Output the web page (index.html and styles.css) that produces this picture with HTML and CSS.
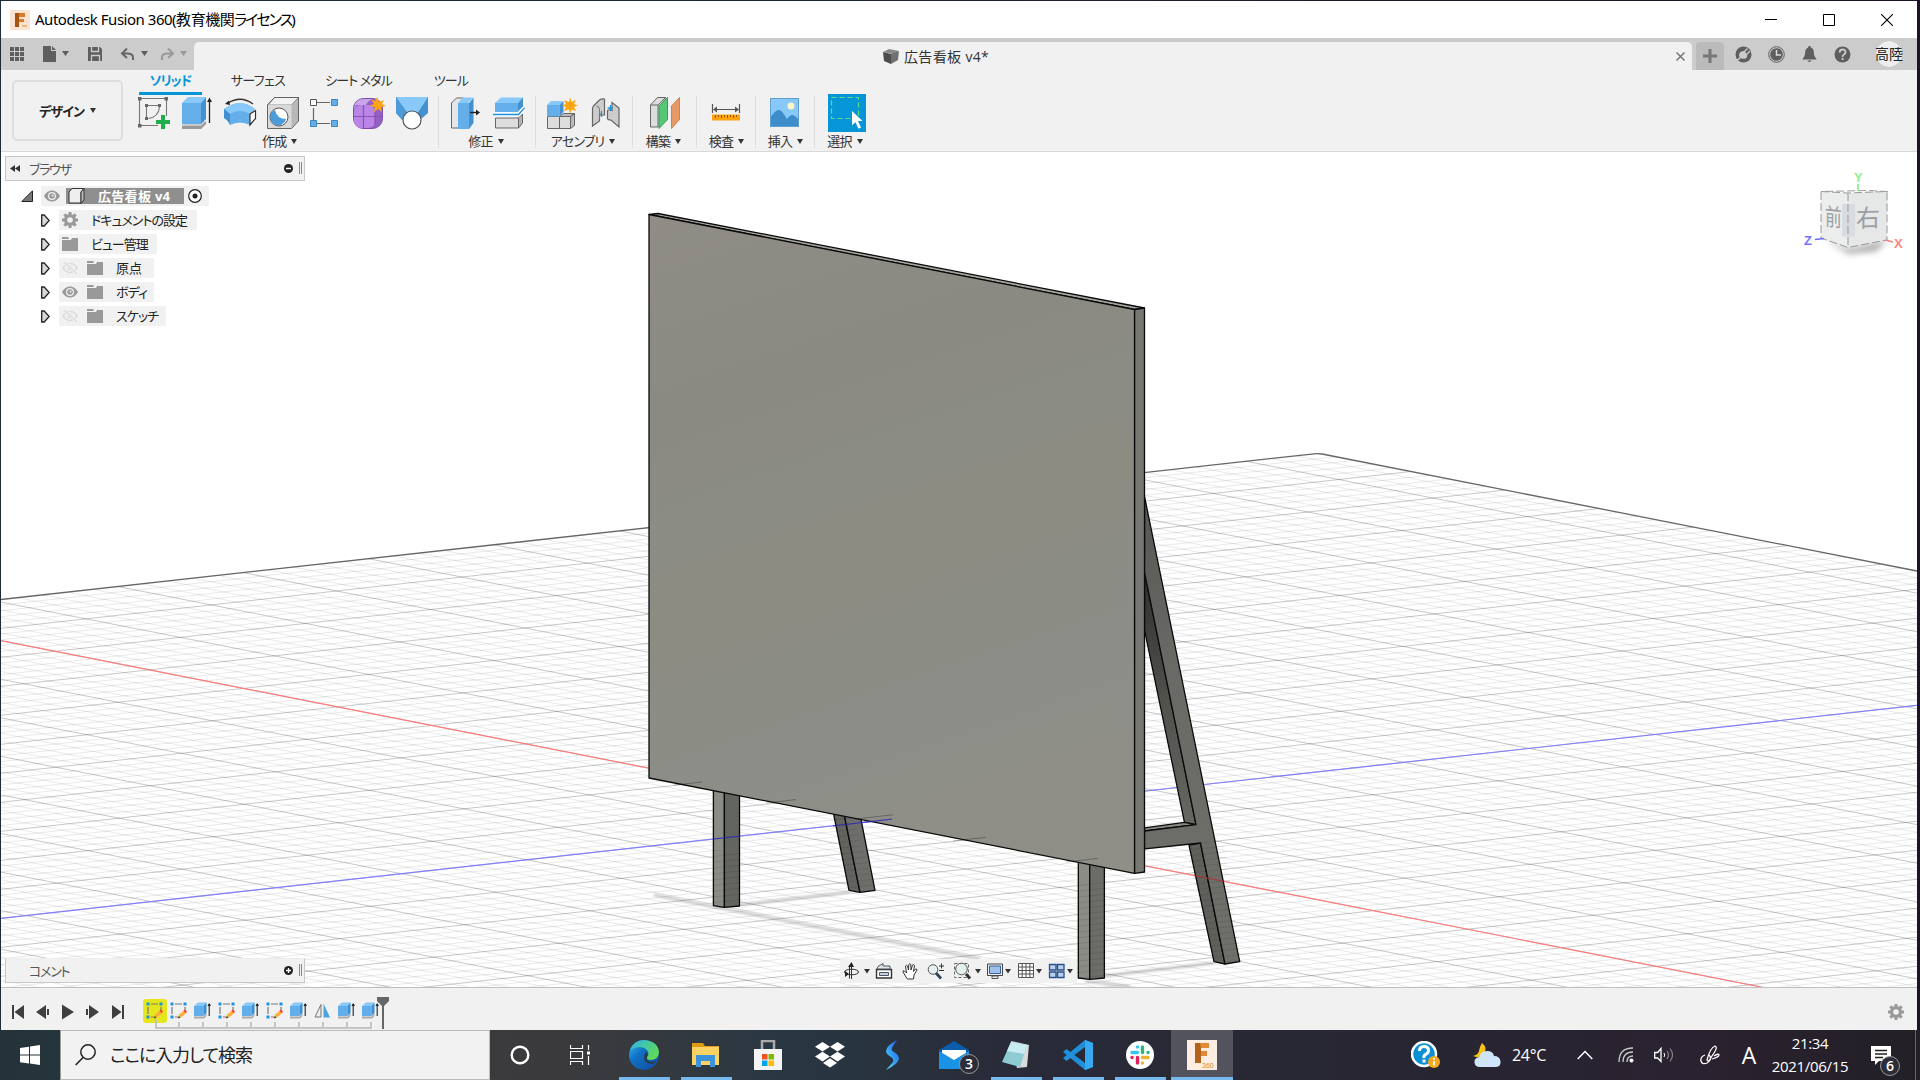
FILE: index.html
```html
<!DOCTYPE html>
<html lang="ja">
<head>
<meta charset="utf-8">
<title>Autodesk Fusion 360</title>
<link rel="stylesheet" href="styles.css">
</head>
<body>
<svg class="defs" width="0" height="0">
  <defs>
    <linearGradient id="gBoard" x1="0" y1="0" x2="0.25" y2="1"><stop offset="0" stop-color="#8f8d85"/><stop offset=".3" stop-color="#8b8a82"/><stop offset=".45" stop-color="#8b8c84"/><stop offset=".6" stop-color="#8d8c83"/><stop offset=".8" stop-color="#8b8d86"/><stop offset="1" stop-color="#8f8f88"/></linearGradient>
    <linearGradient id="gDark" x1="0" y1="0" x2="0" y2="1"><stop offset="0" stop-color="#30302e"/><stop offset=".5" stop-color="#50514d"/><stop offset="1" stop-color="#666761"/></linearGradient>
    <linearGradient id="gLeg" x1="0" y1="0" x2="0" y2="1"><stop offset="0" stop-color="#565753"/><stop offset=".35" stop-color="#696a65"/><stop offset="1" stop-color="#6f706a"/></linearGradient>
    <linearGradient id="gEdge" x1="0" y1="0" x2="1" y2="1"><stop offset="0" stop-color="#35c1f1"/><stop offset=".4" stop-color="#0f6fc4"/><stop offset="1" stop-color="#114a9b"/></linearGradient>
    <linearGradient id="gEdge2" x1="0" y1="0" x2="1" y2=".6"><stop offset="0" stop-color="#2bb3ee"/><stop offset="1" stop-color="#5fdc55"/></linearGradient>
    <linearGradient id="gS" x1="0" y1="1" x2="1" y2="0"><stop offset="0" stop-color="#6fe0f8"/><stop offset=".5" stop-color="#2f9cf5"/><stop offset="1" stop-color="#2a50d8"/></linearGradient>
    <filter id="soft"><feGaussianBlur stdDeviation="1.3"/></filter>
    <filter id="cubeShade" x="-30%" y="-60%" width="160%" height="220%"><feGaussianBlur stdDeviation="3"/></filter>
  </defs>
  <symbol id="i-eye" viewBox="0 0 16 12"><path d="M0 6C3 1 6 .5 8 .5S13 1 16 6c-3 5-6 5.500-8 5.500S3 11 0 6z" fill="#9a9a9a"/><circle cx="8" cy="6" r="4" fill="#f1f1f1"/><circle cx="8" cy="6" r="2.800" fill="#999"/><circle cx="8.600" cy="5.500" r="1" fill="#eee"/></symbol>
  <symbol id="i-eyeoff" viewBox="0 0 16 12"><path d="M1 6C3 2 6 1.500 8 1.500S13 2 15 6c-3 4-5 4.500-7 4.500S4 10 1 6z" fill="none" stroke="#ddd" stroke-width="1.700"/><circle cx="8" cy="6" r="2.500" fill="#ddd"/><path d="M2 0l13 12" stroke="#f1f1f1" stroke-width="3"/><path d="M2 0l13 12" stroke="#ddd" stroke-width="1.400"/></symbol>
  <symbol id="i-folder" viewBox="0 0 16 14"><path d="M0 0h6l1 2H0zM0 3h9l1-2h6v13H0z" fill="#999"/></symbol>
  <symbol id="i-gear" viewBox="0 0 16 16"><g fill="#999"><path d="M6.500 0h3v16h-3zM0 6.500h16v3H0z"/><path d="M6.500 0h3v16h-3zM0 6.500h16v3H0z" transform="rotate(45 8 8)"/><circle cx="8" cy="8" r="6"/></g><circle cx="8" cy="8" r="2.800" fill="#f1f1f1"/></symbol>
  <symbol id="i-tri" viewBox="0 0 9 13"><path d="M.7 1h2.500l5 5.500-5 5.500H.7z" fill="#d8d8d8" stroke="#222" stroke-width="1.300"/></symbol>
  <symbol id="i-sketch" viewBox="0 0 17 17"><path d="M5 2h7M2 5v7M15 5v3M5 15h3" stroke="#777" stroke-width="1.200"/><g fill="#1a95e0"><path d="M.5.500h3v3h-3zM13.500.500h3v3h-3zM.5 13.500h3v3h-3z"/></g><path d="M8 16l1-3.500 5-4 2.500 2.500-5 4z" fill="#fbb03b"/><path d="M13.500 8.800l1.500-1.300 2 2-1.500 1.500z" fill="#f33"/><path d="M8 16.500l.8-2.500 1.700 1.700z" fill="#333"/></symbol>
  <symbol id="i-ext" viewBox="0 0 17 17"><path d="M0 14.500h9.500l3-3v2.500l-2.500 2.500H0z" fill="#aaa"/><path d="M0 4l4-3.500h8.500L9.500 4z" fill="#88c9f9"/><path d="M0 4h9.500v10H0z" fill="#63aeea"/><path d="M9.500 4l3-3.500V11l-3 3z" fill="#3d8fd3"/><path d="M15.200 2v12" stroke="#333" stroke-width="1.200"/><path d="M13.400 4l1.800-3 1.800 3z" fill="#222"/></symbol>
</svg>

<div class="screen">
  <div class="window">
    <header class="titlebar">
      <svg class="app-icon" width="20" height="20" viewBox="0 0 20 20"><rect width="20" height="20" fill="#fbe3d0"/><path d="M5 3h10v4H9v2h5v3H9v5H5z" fill="#d67b27"/><path d="M5 3h4v14H5z" fill="#a65312"/><path d="M12 15h5v2h-5z" fill="#f1b987"/></svg>
      <span class="app-title">Autodesk Fusion 360(教育機関<span class="kana">ライセンス</span>)</span>
      <div class="win-buttons">
        <svg width="12" height="12"><path d="M0 5.500h12" stroke="#000"/></svg>
        <svg width="12" height="12"><path d="M.5.500h11v11H.5z" fill="none" stroke="#000"/></svg>
        <svg width="12" height="12"><path d="M0 0l12 12M12 0L0 12" stroke="#000" stroke-width="1.100"/></svg>
      </div>
    </header>

    <div class="tabbar">
      <div class="quick">
        <svg width="188" height="32" viewBox="1 38 188 32">
          <g fill="#5e5e5e"><path d="M10 47h4v4h-4zM15 47h4v4h-4zM20 47h4v4h-4zM10 52h4v4h-4zM15 52h4v4h-4zM20 52h4v4h-4zM10 57h4v4h-4zM15 57h4v4h-4zM20 57h4v4h-4z"/><path d="M43 46h8v5h5v11H43zM52 46l4 4h-4z"/><path d="M62 51h7l-3.500 5zM141 51h7l-3.500 5z"/><path d="M88 47h12l2 2v12H88z"/></g>
          <path d="M91.500 47v4.500h7V47M91.500 61v-5.500h8V61" fill="none" stroke="#ccc" stroke-width="1.300"/>
          <path d="M133 60v-2.500q0-4-6-4h-4M127 48.500l-5 5 5 4.500" fill="none" stroke="#666" stroke-width="2"/>
          <path d="M162 60v-2.500q0-4 6-4h4M168 48.500l5 5-5 4.500" fill="none" stroke="#999" stroke-width="2"/><path d="M180 51h7l-3.500 5z" fill="#999"/>
        </svg>
      </div>
      <div class="doc-tab">
        <svg width="16" height="15" viewBox="0 0 16 15"><path d="M0 3l6-3 10 2-6 3z" fill="#888"/><path d="M0 3l8 2v10l-7-3z" fill="#4d4d4d"/><path d="M8 5l8-3-1 9-7 4z" fill="#707070"/></svg>
        <span class="doc-name">広告看板 v4*</span>
        <svg class="tab-close" width="9" height="9"><path d="M.5.500l8 8M8.500.500l-8 8" stroke="#777" stroke-width="1.500"/></svg>
      </div>
      <div class="new-tab"><svg width="14" height="14"><path d="M7 0v14M0 7h14" stroke="#777" stroke-width="3"/></svg></div>
      <div class="status">
        <svg width="17" height="17"><circle cx="8.500" cy="8.500" r="8" fill="#5e5e5e"/><path d="M4.500 11.500q-1.500-4.500 2-6 2-1 3 0l2.500 2.500q1 3-1.500 4.500-3 1-6-1z" fill="#ccc"/><path d="M9 6l3.500-3.500M11.500 8.500L15 5M5 11.500Q4 14 1.500 14" fill="none" stroke="#ccc" stroke-width="1.400"/></svg>
        <svg width="17" height="17"><circle cx="8.500" cy="8.500" r="7.800" fill="none" stroke="#5e5e5e"/><circle cx="8.500" cy="8.500" r="6.300" fill="#5e5e5e"/><path d="M8.500 4v5H13" fill="none" stroke="#ddd" stroke-width="1.500"/></svg>
        <svg width="17" height="17"><path d="M8.500 0a1.300 1.300 0 0 1 1.300 1.500q3 1 3 4.500 0 4 1.200 5t1.700 2.500H1.300Q2 12 3 11t1.200-5q0-3.500 3-4.500A1.300 1.300 0 0 1 8.500 0zM6.500 14.500h4q-2 3-4 0z" fill="#5e5e5e"/></svg>
        <svg width="17" height="17"><circle cx="8.500" cy="8.500" r="8" fill="#5e5e5e"/><path d="M5.700 6.500q0-3 2.900-3t2.900 2.600q0 1.600-1.600 2.400T8.600 11M8.600 12v2" fill="none" stroke="#ccc" stroke-width="1.900"/></svg>
        <span class="avatar">高陸</span>
      </div>
    </div>

    <div class="ribbon">
      <div class="workspace"><span>デザイン</span><i class="caret"></i></div>
      <div class="ribbon-body">
        <nav class="ribbon-tabs">
          <span class="rtab t1 active">ソリッド</span><span class="rtab t2">サーフェス</span><span class="rtab t3">シート メタル</span><span class="rtab t4">ツール</span>
        </nav>
        <div class="groups">
          <section class="group g1">
            <svg width="310" height="38" viewBox="128 94 310 38">
              <path d="M140 98.500h26M139.500 98v27M140 125.500h18M166.500 98v18" stroke="#777" stroke-width="1.100"/><g fill="#666"><path d="M138 97h3.500v3.500H138zM164.500 97h3.500v3.500h-3.500zM138 124h3.500v3.500H138zM145 104h3v3h-3zM158 104h3v3h-3zM145 117h3v3h-3z"/></g><path d="M148 105.500h10M146.500 107v10M159.500 107q-1 10-11 11.500" fill="none" stroke="#777" stroke-width="1.100"/><path d="M161 115h4v5h5v4h-5v5h-4v-5h-5v-4h5z" fill="#1fae4b"/>
              <path d="M182 125.500h19l5-4.500v3l-5 5h-19z" fill="#999"/><path d="M182 125h19l4-4h-19z" fill="#ccc"/><path d="M182 103l6-6h18l-5 6z" fill="#88c9fa"/><path d="M182 103h19v21h-19z" fill="#64aee9"/><path d="M201 103l5-6v22l-5 5z" fill="#4391d0"/><path d="M209.500 100v23" stroke="#222" stroke-width="1.300"/><path d="M207 102l2.500-4.500L212 102z" fill="#222"/>
              <path d="M224 109q16-12 31 0l-5 5v11q-10-5-20 0-2-5-6-7z" fill="#64aee9"/><path d="M224 109q16-12 31 0l-5 5q-10-6-20 0z" fill="#88c9fa"/><path d="M224 109l6 5v11q-1-4-6-7z" fill="#3f8fd0"/><path d="M250 114l5.500-3.500v8l-5.500 6.500z" fill="#fff" stroke="#333" stroke-width="1.200"/><path d="M228 103q13-8 25 1" fill="none" stroke="#333" stroke-width="1.300"/><path d="M225 104l4-3.500 1 4.500z" fill="#222"/>
              <path d="M267.500 105l7-7.500h24l-7 7.500z" fill="#f2f2f2" stroke="#666"/><path d="M267.500 105h24v23h-24z" fill="#d9d9d9" stroke="#d9d9d9"/><path d="M291.500 105l7-7.500V121l-7 7z" fill="#b8b8b8"/><path d="M267.500 105l7-7.500h24V121l-7 7.500h-24z" fill="none" stroke="#666"/><circle cx="279" cy="117" r="9" fill="#fff" stroke="#555"/><path d="M275 110a8 8 0 1 0 11 9q-9 0-11-9z" fill="#4b9cdb"/>
              <path d="M313.500 108v12M317 102.500h13M317 123.500h13" stroke="#666" stroke-width="1.200"/><path d="M310.500 99.500h6v6h-6z" fill="#fff" stroke="#555"/><g fill="#64aee9" stroke="#3e86bf"><path d="M331.500 99.500h6v6h-6zM310.500 120.500h6v6h-6zM331.500 120.500h6v6h-6z"/></g>
              <rect x="353.500" y="98.500" width="29" height="30" rx="10" fill="#9560c4" stroke="#7c4ba8"/><path d="M354 110q0-11 10-11h8q-5 3-6 6H356z" fill="#c9a6ea"/><rect x="354" y="105" width="21" height="23" rx="7" fill="#ba85e6"/><path d="M363.500 105v23M354 116.500h29M375 112v12" stroke="#8753b5" stroke-width="1.200"/><path d="M377 97l2 5 5-2-2 4 4 2-5 1 1 5-4-3-4 3 1-5-6-1 5-2-3-5 4 2z" fill="#fca510"/>
              <path d="M396 97h32v16l-7 6-9-8-10 9-6-7z" fill="#4391d0"/><path d="M396 97h32l-11 17h-9z" fill="#88c9fa"/><path d="M396 97l12 17-5 6-7-7z" fill="#4c9ad8"/><circle cx="412" cy="120" r="9" fill="#fff" stroke="#555" stroke-width="1.200"/>
            </svg>
            <span class="glabel">作成<i class="caret"></i></span>
          </section>
          <section class="group g2">
            <svg width="96" height="38" viewBox="439 94 96 38">
              <path d="M451.500 103l5-5h7v30h-12z" fill="#e6e6e6" stroke="#666"/><path d="M458 103l5-5.500h10L468 103z" fill="#88c9fa"/><path d="M458 103h11v26h-11z" fill="#64aee9"/><path d="M469 103l4.500-5.500V123l-4.500 6z" fill="#4391d0"/><path d="M470 112.500h8" stroke="#222" stroke-width="1.400"/><path d="M476 109.500l4 3-4 3z" fill="#222"/>
              <path d="M495 103l6-5.500h22l-5 5.500z" fill="#88c9fa"/><path d="M495 103h23v9h-23z" fill="#64aee9"/><path d="M518 103l5-5.500v9l-5 5z" fill="#4391d0"/><path d="M495.500 118h23v10h-23z" fill="#ddd" stroke="#666"/><path d="M518.500 118l4-4v9l-4 5z" fill="#b5b5b5" stroke="#666"/><path d="M493 114.500h25.500l6-6.500" fill="none" stroke="#fff" stroke-width="4"/><path d="M493 114.500h25.500l6-6.500" fill="none" stroke="#1a8fe0" stroke-width="1.300"/>
            </svg>
            <span class="glabel">修正<i class="caret"></i></span>
          </section>
          <section class="group g3">
            <svg width="96" height="38" viewBox="536 94 96 38">
              <path d="M547.500 116.500h12v12h-12zM559.500 116.500h11v12h-11z" fill="#ddd" stroke="#666"/><path d="M559.500 116.500l4-3h11l-4 3zM570.500 116.500l4-3v12l-4 3z" fill="#bbb" stroke="#666"/><path d="M547 105l4-4h12l-3 4z" fill="#88c9fa"/><path d="M547 105h12.500v11.500H547z" fill="#64aee9"/><path d="M559.500 105l4-4v11l-4 4z" fill="#4391d0"/><path d="M570 97l1.500 5 4.500-2-2 4 4 1.500-4 1.500 2 4-4.500-1.500L570 114l-1-4.500-5 1.500 2-4-4-1.500 4-1.500-2-4 5 2z" fill="#fca510"/>
              <path d="M592.500 109q0-3 3-5l4-4q2-1.500 5-1v16h-4l-1-2v8l-7 5zM607.500 110.500q2-1.500 4.500 0v-8l7 5.500v19l-8-7q-4 0-3.500-2z" fill="#ccc" stroke="#666" stroke-width="1.200"/><path d="M596.500 106q3 0 3 4v9" fill="none" stroke="#777"/><path d="M601.500 111v6M610.500 105v6M607.500 108h5" stroke="#1a95e0" stroke-width="1.300"/>
            </svg>
            <span class="glabel">アセンブリ<i class="caret"></i></span>
          </section>
          <section class="group g4">
            <svg width="63" height="38" viewBox="633 94 63 38"><path d="M650.500 105l7-7.500h8l-7.500 7.500v22h-7.500z" fill="#ddd" stroke="#666"/><path d="M650.500 105h7.500l8-7.500" fill="none" stroke="#666"/><path d="M659 106l8.500-8.500v22l-8.500 9z" fill="#55c777" stroke="#369d58"/><path d="M671.500 106l8-8.500v22l-8 9z" fill="#e79a65" stroke="#cc8350"/></svg>
            <span class="glabel">構築<i class="caret"></i></span>
          </section>
          <section class="group g5">
            <svg width="58" height="38" viewBox="697 94 58 38"><path d="M712.500 104v9M739.500 104v9M714 109.500h24" stroke="#555" stroke-width="1.200"/><path d="M713 109.500l4-3v6zM739 109.500l-4-3v6z" fill="#555"/><path d="M712 114.500h28v6h-28z" fill="#fca510"/><path d="M715.500 115v3M718.500 115v2M721.500 115v3M724.500 115v2M727.500 115v3M730.500 115v2M733.500 115v3M736.500 115v2" stroke="#8b5a0a"/></svg>
            <span class="glabel">検査<i class="caret"></i></span>
          </section>
          <section class="group g6">
            <svg width="58" height="38" viewBox="756 94 58 38"><path d="M770 98h29v29h-29z" fill="#88c9fa"/><path d="M770 118q6-9 9-8 3 0 8 9 3-4 5-4 3 0 7 5v7h-29z" fill="#3d8dcb"/><circle cx="791" cy="106" r="3.500" fill="#fdf6c3"/><path d="M770.500 98.500h28v28h-28z" fill="none" stroke="#5f9fd0"/></svg>
            <span class="glabel">挿入<i class="caret"></i></span>
          </section>
          <section class="group g7">
            <svg width="64" height="38" viewBox="815 94 64 38"><path d="M828 94h38v38h-38z" fill="#0696d7"/><path d="M831.500 97.500h27v21h-27z" fill="none" stroke="#5fdb8a" stroke-width="1.200" stroke-dasharray="5 3"/><path d="M852 111l10.500 10h-4.500l3 6.500-2.500 1.200-3-6.500-3.500 3z" fill="#fff"/></svg>
            <span class="glabel">選択<i class="caret"></i></span>
          </section>
        </div>
      </div>
    </div>

    <main class="viewport">
      <svg class="scene" width="1916" height="835" viewBox="1 152 1916 835">
        <clipPath id="ground"><path d="M1 599.500L1312 454q6-1 12 .6L1917 571v416H1z"/></clipPath>
        <clipPath id="feet"><path d="M713 850h27v60h-27zM833 816h20l24 80h-28zM1078 880h27v100h-27zM1185 845l15-3 24-1 18 124h-26z"/></clipPath>
        <g clip-path="url(#ground)">
          <path id="minor" fill="none" stroke="#000" stroke-opacity=".085" stroke-width="1"/>
          <path id="major" fill="none" stroke="#000" stroke-opacity=".22" stroke-width="1"/>
        </g>
        <path d="M1 599.500L1314 453.800q4-.5 8 .2L1917 571" fill="none" stroke="#666" stroke-width="1.300"/>
        <g fill="none" stroke="#000" filter="url(#soft)" stroke-opacity=".2" stroke-width="3"><path d="M654 895l326 64M739 905l110-13M1085 981l45 6M1104 976l110-13"/></g>
        <path d="M1 640.700L1761 987" stroke="#ff7b7b" stroke-width="1.200"/>
        <path d="M1 918.300L1917 705.300" stroke="#8080ff" stroke-width="1.200"/>
        <g stroke="#0a0a0a" stroke-width="1.300" stroke-linejoin="round">
          <path d="M1144.500 572L1196 824.600 1184.500 822.400 1144.500 630z" fill="url(#gDark)"/>
          <path d="M1144.500 827.800l40-5.400 11.500 2.200-51.500 6.400z" fill="#888a84"/>
          <path d="M1189 845l11.500-2L1225 964l-11-2.300z" fill="#5f605b"/>
          <path d="M1144.500 496.500L1239.700 961.700 1225 964 1200.500 843l-56 5.800V831l51.500-6.400-51.500-252.200z" fill="url(#gLeg)"/>
          <path d="M833.400 813l10.900 2 15.700 77.300-11-2z" fill="#63645f"/><path d="M844.300 815l16.400 3 14.300 72.300-15 2z" fill="#6e6f6a"/>
          <path d="M713.400 788l11 2v117.300l-11-1.600z" fill="#8b8c84"/><path d="M724.400 790l15.100 3v113l-15.100 1.300z" fill="#636560"/>
          <path d="M1078.300 860l11.400 2v117.300l-11.400-1.300z" fill="#8b8c84"/><path d="M1089.700 862l14.700 3v113l-14.700 1.300z" fill="#6c6d68"/>
          <path d="M649 214.500l9-1 486.500 94.500-10 1.500z" fill="#a3a49e"/>
          <path d="M1134.500 309.500l10-1.500v564l-10 1.300z" fill="#767873"/>
          <path d="M649 214.500l485.500 95v563.800L649 778z" fill="url(#gBoard)"/>
        </g>
        <g clip-path="url(#feet)"><path id="over" fill="none" stroke="#000" stroke-opacity=".09" stroke-width="1"/></g>
        <path d="M674 785l28-3M766 803l30-3.500M855 819l38-4.200M953 841l33-3.700M1066 862l32-3.600" stroke="#000" stroke-opacity=".28"/>
        <path d="M713 839.200l27-3M833 825.800l59-6.600" stroke="#2424b8" stroke-width="1.200" stroke-opacity=".75"/>
        <path d="M1194 875.300l30 6" stroke="#a33" stroke-width="1.200" stroke-opacity=".8"/>
      </svg>

      <aside class="browser">
        <div class="panel-head">
          <svg width="10" height="7"><path d="M5 0v7L0 3.500zM10 0v7L5 3.500z" fill="#333"/></svg>
          <span class="panel-title">ブラウザ</span>
          <svg width="9" height="9"><circle cx="4.500" cy="4.500" r="4.500" fill="#222"/><path d="M2 4.500h5" stroke="#fff" stroke-width="1.500"/></svg>
          <i class="grip"></i>
        </div>
        <ul class="tree">
          <li class="root"><svg class="tw" width="12" height="12"><path d="M11.500.8v10.700H.8z" fill="#777" stroke="#222"/></svg>
            <div class="node"><svg width="16" height="12"><use href="#i-eye"/></svg><div class="sel"><svg width="17" height="16"><path d="M1 4l3-3.500h12l-3 3.500v11H1z" fill="#eee" stroke="#333"/><path d="M13 4l3-3.500V12l-3 3.500z" fill="#bbb" stroke="#333"/></svg><span>広告看板 v4</span></div><svg width="14" height="14"><circle cx="7" cy="7" r="6.300" fill="#fff" stroke="#222" stroke-width="1.200"/><circle cx="7" cy="7" r="2.500" fill="#222"/></svg></div></li>
          <li><svg class="tw" width="9" height="13"><use href="#i-tri"/></svg><div class="node w138"><svg width="16" height="16"><use href="#i-gear"/></svg><span class="n1">ドキュメントの設定</span></div></li>
          <li><svg class="tw" width="9" height="13"><use href="#i-tri"/></svg><div class="node w98"><svg width="16" height="14"><use href="#i-folder"/></svg><span class="n2">ビュー管理</span></div></li>
          <li><svg class="tw" width="9" height="13"><use href="#i-tri"/></svg><div class="node w95"><svg width="16" height="12"><use href="#i-eyeoff"/></svg><svg class="f2" width="16" height="14"><use href="#i-folder"/></svg><span class="n3">原点</span></div></li>
          <li><svg class="tw" width="9" height="13"><use href="#i-tri"/></svg><div class="node w95"><svg width="16" height="12"><use href="#i-eye"/></svg><svg class="f2" width="16" height="14"><use href="#i-folder"/></svg><span class="n4">ボディ</span></div></li>
          <li><svg class="tw" width="9" height="13"><use href="#i-tri"/></svg><div class="node w107"><svg width="16" height="12"><use href="#i-eyeoff"/></svg><svg class="f2" width="16" height="14"><use href="#i-folder"/></svg><span class="n5">スケッチ</span></div></li>
        </ul>
      </aside>

      <svg class="viewcube" width="110" height="100" viewBox="1798 165 110 100">
        <path d="M1822 236l26 13 40-9-12 11-28 3z" fill="#555" opacity=".5" filter="url(#cubeShade)"/>
        <path d="M1821 192l27 1v54l-27-9.500z" fill="#eceded"/><path d="M1848 193l39.500-1.500L1887 240l-39 7z" fill="#e6e7e7"/><path d="M1842 204h13v32l-7 1-6-1z" fill="#d9dcde"/>
        <path d="M1821 191.500l27 1.500 39.500-1.500-20-1zM1848 193v54M1821 192v46l27 9.500 39-7.500v-48" fill="none" stroke="#999" stroke-dasharray="8 3"/>
        <path d="M1858 184v7" stroke="#7dea7d" stroke-width="1.500"/><path d="M1815 239.500l9-1" stroke="#6a6aff" stroke-width="1.500"/><path d="M1885 240l8 2" stroke="#ff8080" stroke-width="1.500"/>
        <g class="cube-text"><text x="0" y="0" transform="matrix(.7 .08 0 1 1825 225)" font-size="24" fill="#9a9fa3">前</text><text transform="matrix(1 -.03 0 1 1856 227)" font-size="24" fill="#9a9fa3">右</text></g>
        <g class="axis-text"><text x="1854" y="182" fill="#8cf08c">Y</text><text x="1804" y="245" fill="#7474ff">Z</text><text x="1894" y="248" fill="#ff8585">X</text></g>
      </svg>

      <div class="comment panel-head">
        <span class="panel-title">コメント</span>
        <svg width="9" height="9"><circle cx="4.500" cy="4.500" r="4.500" fill="#222"/><path d="M2 4.500h5M4.500 2v5" stroke="#fff" stroke-width="1.300"/></svg>
        <i class="grip"></i>
      </div>

      <div class="navbar">
        <svg width="237" height="24" viewBox="840 959 237 24">
          <g fill="none" stroke="#333"><path d="M851.500 965v14M849.500 965.500v13"/><ellipse cx="851.500" cy="972" rx="7" ry="2.800"/></g><path d="M848 967l3.500-5 2.500 5zM845 971v6l4-3zM848 979h6" fill="#222"/>
          <path d="M876.500 969.500h15v8.500h-15z" fill="#fff" stroke="#333" stroke-width="1.400"/><path d="M879.500 972.500h9v3h-9z" fill="#ccd" stroke="#456"/><path d="M877 969l1-2.500 5-3v2.500h7v3z" fill="#dfe6ea" stroke="#445" stroke-width=".9"/>
          <path d="M906 977l-3-5q-.5-2 1.500-1l2 2-1-7q1-1.500 2 0l1 4 .3-5.500q1-1.500 2 0l.2 5.500 1.500-5q1.500-1 2 .5l-1 6 2-2.500q1.500-.5 1.500 1l-3 5-.5 4h-6z" fill="#fff" stroke="#333"/>
          <circle cx="933" cy="969.500" r="4.800" fill="#e6f0f0" stroke="#555"/><path d="M936 973l5 5.500" stroke="#345" stroke-width="2.800"/><path d="M939 966h5M941.500 963.500v5M939 970.500h5" stroke="#333"/>
          <path d="M954.500 963.500h14v14h-14z" fill="none" stroke="#666" stroke-dasharray="3 2"/><circle cx="961.500" cy="969" r="5.800" fill="#e3f0ee" stroke="#555"/><path d="M966 974l4 4.500" stroke="#333" stroke-width="3"/>
          <path d="M987.500 964h15v11.500h-15z" fill="#eee" stroke="#444"/><path d="M989.500 966h11v7.500h-11z" fill="#9fc0ea" stroke="#36619c"/><path d="M992 976h6v2.500h-6z" fill="#eee" stroke="#555"/>
          <path d="M1018.500 963.500h15v14h-15zM1018.500 967h15M1018.500 970.500h15M1018.500 974h15M1022.200 963.500v14M1026 963.500v14M1029.800 963.500v14" fill="#fff" stroke="#555"/>
          <path d="M1049.500 964.500h6.500v5.500h-6.500zM1057.500 964.500h6.500v5.500h-6.500zM1049.500 972h6.500v5.500h-6.500zM1057.500 972h6.500v5.500h-6.500z" fill="#b9d0f0" stroke="#2a4f86" stroke-width="1.300"/>
          <path d="M864 969h6l-3 4.500zM975 969h6l-3 4.500zM1005 969h6l-3 4.500zM1036 969h6l-3 4.500zM1067 969h6l-3 4.500z" fill="#333"/>
        </svg>
      </div>
    </main>

    <footer class="timeline">
      <svg class="play" width="142" height="42" viewBox="1 988 142 42"><g fill="#3f3f3f"><path d="M12 1005h2v14h-2zM24 1005v14l-9.500-7zM46 1005v14l-10-7zM47 1009h2v6h-2zM62 1004.500l12 7.500-12 7.500zM86 1009h2v6h-2zM89 1005l10 7-10 7zM112 1005l9.500 7-9.500 7zM122 1005h2v14h-2z"/></g></svg>
      <div class="features">
        <div class="feat hl"><svg width="17" height="17"><use href="#i-sketch"/></svg></div>
        <div class="feat"><svg width="17" height="17"><use href="#i-sketch"/></svg></div>
        <div class="feat"><svg width="17" height="17"><use href="#i-ext"/></svg></div>
        <div class="feat"><svg width="17" height="17"><use href="#i-sketch"/></svg></div>
        <div class="feat"><svg width="17" height="17"><use href="#i-ext"/></svg></div>
        <div class="feat"><svg width="17" height="17"><use href="#i-sketch"/></svg></div>
        <div class="feat"><svg width="17" height="17"><use href="#i-ext"/></svg></div>
        <div class="feat"><svg width="17" height="17"><path d="M7 2.500v12.500H1z" fill="#eee" stroke="#777"/><path d="M9.500 1.500v14h6.500z" fill="#4ba3e3"/></svg></div>
        <div class="feat"><svg width="17" height="17"><use href="#i-ext"/></svg></div>
        <div class="feat"><svg width="17" height="17"><use href="#i-ext"/></svg></div>
        <svg class="track" width="250" height="34" viewBox="143 996 250 34"><path d="M155 1028h217M156 1019v9M179 1022v6M203 1022v6M227 1022v6M251 1022v6M275 1022v6M299 1022v6M323 1022v6M347 1022v6M371 1022v6" fill="none" stroke="#c4c4c4" stroke-width="2"/><path d="M377 997h12v4l-5 5v23h-2v-23l-5-5z" fill="#666"/></svg>
      </div>
      <svg class="settings" width="16" height="16"><use href="#i-gear"/></svg>
    </footer>
  </div>

  <div class="taskbar">
    <div class="start"><svg width="20" height="20"><path d="M0 3l9-1.300V9.500H0zM10 1.500L20 0v9.500H10zM0 10.500h9v8L0 17.200zM10 10.500h10V20l-10-1.500z" fill="#fff"/></svg></div>
    <div class="search"><svg width="22" height="22"><circle cx="13" cy="8" r="7.200" fill="none" stroke="#222" stroke-width="1.500"/><path d="M8 13.500L.7 21" stroke="#222" stroke-width="1.600"/></svg><span>ここに入力して検索</span></div>
    <div class="apps">
      <div class="app"><svg width="20" height="20"><circle cx="10" cy="10" r="8.300" fill="none" stroke="#fff" stroke-width="2.400"/></svg></div>
      <div class="app"><svg width="20" height="20"><path d="M.5 0v3.500h12V0M.5 20v-3.500h12V20M.5 6.500h12v7H.5zM18.500 0v5M18.500 11v9" fill="none" stroke="#fff" stroke-width="1.200"/><path d="M17 6.500h3v3h-3z" fill="#fff"/></svg></div>
      <div class="app run"><svg width="30" height="30"><circle cx="15" cy="15" r="15" fill="url(#gEdge)"/><path d="M1 10Q5 0 15 0q14 1 15 12 0 7-8 8-5 0-4-3 3-3 0-7Q12 4 1 10z" fill="url(#gEdge2)"/><path d="M18 17q-1 4 4 5 4 0 6-2-2 3-5 4-8 0-8-7 0-3 2-5 3 2 1 5z" fill="#2c3a46"/></svg></div>
      <div class="app run"><svg width="28" height="24"><path d="M0 0h11l2 3h14v5H0z" fill="#dd9c13"/><path d="M0 4h27v18H0z" fill="#fcd363"/><path d="M4 24V12h19v12h-5v-6h-9v6z" fill="#3b93da"/></svg></div>
      <div class="app"><svg width="30" height="30"><path d="M9 9V1h12v8" fill="none" stroke="#aaa" stroke-width="2.500"/><path d="M1 9h28v21H1z" fill="#f4f4f4"/><path d="M9 14h5.500v5.500H9z" fill="#f25022"/><path d="M15.500 14H21v5.500h-5.500z" fill="#7fba00"/><path d="M9 20.500h5.500V26H9z" fill="#00a4ef"/><path d="M15.500 20.500H21V26h-5.500z" fill="#ffb900"/></svg></div>
      <div class="app"><svg width="30" height="26"><path d="M7.500 0L15 4.800 7.500 9.600 0 4.800zM22.500 0L30 4.800l-7.500 4.800L15 4.800zM7.500 9.800L15 14.600l-7.500 4.800L0 14.600zM22.500 9.800l7.500 4.800-7.500 4.800-7.500-4.800zM15 16.200l7 4.700-7 4.600-7-4.600z" fill="#fff"/></svg></div>
      <div class="app"><svg width="18" height="30"><path d="M14 0Q3 6 3 11q0 3 5 6 3 2 2 5L3 30q12-6 13-11 0-4-5-7-4-2-1-6z" fill="url(#gS)"/></svg></div>
      <div class="app mail"><svg width="30" height="28"><path d="M15 0l15 9v19H0V9z" fill="#0b5cab"/><path d="M3 9h24v12H3z" fill="#fff"/><path d="M0 10l15 9 15-9v18H0z" fill="#1a93e6"/><path d="M4 9.500h22l-11 9z" fill="#fff"/></svg><b class="count">3</b></div>
      <div class="app run"><svg width="28" height="28"><path d="M9 0l18 4-2 22-10 1z" fill="#d8dadb"/><path d="M9 1l16 3-7 22-18-5z" fill="#8ecbd3"/><path d="M9 1l16 3-3 9-17-3z" fill="#c9ecf0"/></svg></div>
      <div class="app run"><svg width="30" height="30"><path d="M22 0l8 3v24l-8 3L0 12l3.500-3L22 23V7L3.500 21 0 18z" fill="#1f8fd8"/><path d="M22 0l8 3v24l-8 3z" fill="#36a9f0"/></svg></div>
      <div class="app run"><svg width="28" height="28"><circle cx="14" cy="14" r="14" fill="#fff"/><g fill="none" stroke-width="3.400" stroke-linecap="round"><path d="M11.500 6v.1M6 11.500h5.500" stroke="#36c5f0"/><path d="M16.500 6v5.500M22 11.500h.1" stroke="#2eb67d"/><path d="M16.500 22v.1M16.500 16.500H22" stroke="#ecb22e"/><path d="M11.500 16.500V22M6 16.500h.1" stroke="#e01e5a"/></g></svg></div>
      <div class="app run on"><svg width="30" height="30"><rect width="30" height="30" fill="#fdeee1"/><path d="M8 3h14v5h-8v3h6v5h-6v7H8z" fill="#e08a35"/><path d="M8 3h5l1 5v15H8z" fill="#b3611b"/><text class="f360" x="15" y="28">360</text></svg></div>
    </div>
    <div class="tray">
      <svg class="help" width="29" height="28"><circle cx="13" cy="13" r="12" fill="#0d8fd4" stroke="#fff" stroke-width="2.500"/><path d="M8.500 10q0-4.500 4.500-4.500t4.500 4q0 2.500-2.500 3.700T13 17M13 18.500v3" fill="none" stroke="#fff" stroke-width="3"/><circle cx="23" cy="21" r="6" fill="#f5a81c"/><path d="M23 17v1.800M23 20v4.500" stroke="#fff" stroke-width="1.800"/></svg>
      <svg class="weather" width="28" height="24"><path d="M9 0q6 5 2 11-4 5-11 2 5-1 6-5 1-5 3-8z" fill="#fcc419"/><path d="M7 24q-5 0-5.500-4.500T6 14q2-6 8-6t7 5q6 0 6.500 5.500T22 24z" fill="#cfe6fa"/></svg>
      <span class="temp">24°C</span>
      <svg class="chev" width="16" height="10"><path d="M.7 9L8 1.500 15.300 9" fill="none" stroke="#fff" stroke-width="1.500"/></svg>
      <svg class="wifi" width="16" height="16"><g fill="none" stroke="#ccc" stroke-width="1.300"><path d="M1 15Q1 1 15 1M5 15Q5 5 15 5M9 15q0-6 6-6"/></g><circle cx="13.500" cy="13.500" r="2" fill="#fff"/></svg>
      <svg class="vol" width="20" height="16"><path d="M.7 5.500h3L7 1.500v13L3.700 11h-3z" fill="none" stroke="#fff" stroke-width="1.300"/><path d="M10 6q1.500 2 0 4" fill="none" stroke="#fff"/><path d="M13 4q3 4 0 8M16 1.500q5 6.500 0 13" fill="none" stroke="#888" stroke-width="1.200"/></svg>
      <svg class="pen" width="20" height="20"><path d="M7 15Q10 3 15 1q3 1-1 7t-5 8zM5 10q-5 2-4 6t6 2q6-4 2-8M14 11q5-3 5-1t-7 4" fill="none" stroke="#fff" stroke-width="1.300"/></svg>
      <span class="ime">A</span>
      <div class="clock"><span>21:34</span><span>2021/06/15</span></div>
      <div class="notif"><svg width="20" height="19"><path d="M0 0h20v15H8l-4 4v-4H0z" fill="#fff"/><path d="M4 4.500h12M4 8h12M4 11.500h8" stroke="#222" stroke-width="1.300"/></svg><b class="count">6</b></div>
      <i class="peek"></i>
    </div>
  </div>
</div>
<script src="grid.js"></script>
</body>
</html>
```
FILE: grid.js
```javascript
// Ground grid: two families of parallel lines; a line's height is given where it meets x = 1.
function family(slope, origin, step, from, to, every) {
  let minor = '', major = '';
  for (let i = from; i <= to; i++) {
    const y = origin + i * step;
    const seg = `M1 ${y.toFixed(2)}L1917 ${(y + 1916 * slope).toFixed(2)}`;
    if (i % every === 0) major += seg; else minor += seg;
  }
  return [minor, major];
}
const x = family(0.19665, 640.7, 38.57 / 5, -57, 50, 5);
const z = family(-0.1112, 918.3, 29 / 5, -54, 60, 5);
document.getElementById('minor').setAttribute('d', x[0] + z[0]);
document.getElementById('major').setAttribute('d', x[1] + z[1]);
document.getElementById('over').setAttribute('d', z[0] + z[1]);
```
FILE: styles.css
```css
* { box-sizing: border-box; }
body { margin: 0; width: 1920px; height: 1080px; overflow: hidden; font-family: "Open Sans", "Noto Sans CJK JP", sans-serif; font-size: 12px; color: #333; }
svg { display: block; flex: none; }
span { white-space: nowrap; }
.defs { position: absolute; }
.screen { display: flex; flex-direction: column; height: 1080px; background: linear-gradient(90deg, #1c2c3a, #1c2230 50%, #1d1228); }
.window { width: 1916px; height: 1029px; margin: 1px 0 0 1px; display: flex; flex-direction: column; background: #f1f1f1; }

.titlebar { height: 37px; background: #fff; display: flex; align-items: center; padding-left: 9px; }
.app-title { margin: 0 0 2px 5px; font-family: "Noto Sans", "Noto Sans CJK JP", sans-serif; font-size: 15px; color: #000; letter-spacing: -0.48px; font-feature-settings: "palt"; }
.kana { letter-spacing: -2px; }
.win-buttons { margin-left: auto; display: flex; gap: 46px; padding-right: 24px; }

.tabbar { height: 32px; background: #ccc; display: flex; }
.quick { width: 193px; }
.doc-tab { width: 1498px; margin-top: 4px; background: #f1f1f1; border-radius: 5px 5px 0 0; display: flex; align-items: center; padding-left: 689px; }
.doc-name { margin: 0 0 1px 5px; font-size: 14px; letter-spacing: 0.35px; }
.tab-close { margin: 1px 7px 0 auto; }
.new-tab { width: 28px; margin: 4px 0 0 4px; background: #bbb; border-radius: 4px 4px 0 0; display: flex; align-items: center; justify-content: center; }
.status { flex: 1; display: flex; align-items: center; padding-left: 11px; gap: 16px; }
.avatar { margin-left: 8px; width: 28px; height: 26px; border-radius: 13px; background: radial-gradient(circle, #eee 12.5px, transparent 13px); font-size: 14px; line-height: 25px; text-align: center; color: #222; }

.ribbon { height: 82px; border-bottom: 1px solid #d8d8d8; display: flex; }
.workspace { width: 111px; height: 61px; margin: 10px 0 0 11px; border: 2px solid #dedede; border-radius: 5px; display: flex; align-items: center; justify-content: center; gap: 6px; font-size: 13px; font-weight: 600; font-feature-settings: "palt"; color: #222; letter-spacing: -1px; }
.caret { display: inline-block; border: 3px solid transparent; border-top: 5px solid #333; border-bottom: 0; }
.ribbon-body { flex: 1; padding-left: 5px; }
.ribbon-tabs { display: flex; height: 24px; }
.rtab { height: 25px; line-height: 21px; font-size: 13px; text-align: center; font-feature-settings: "palt"; letter-spacing: -0.9px; }
.t1 { margin-left: 11px; width: 63px; }
.t2 { margin-left: 26px; width: 60px; letter-spacing: -0.6px; }
.t3 { margin-left: 37px; width: 67px; }
.t4 { margin-left: 39px; width: 40px; }
.active { color: #0696d7; font-weight: 700; border-bottom: 3px solid #0696d7; }
.groups { display: flex; }
.group { display: flex; flex-direction: column; position: relative; height: 56px; }
.group:not(:last-child)::after { content: ""; position: absolute; right: 0; top: 2px; width: 1.500px; height: 52px; background: #ddd; }
.glabel { height: 19px; line-height: 19px; font-size: 13px; letter-spacing: -0.8px; display: flex; align-items: center; justify-content: center; gap: 5px; font-feature-settings: "palt"; padding-right: 3px; }
.g1 { width: 311px; }
.g1 .glabel { justify-content: flex-start; padding-left: 134px; }
.g2, .g3 { width: 97px; }
.g4 { width: 64px; }
.g5, .g6 { width: 59px; }
.g5 .glabel, .g6 .glabel { padding-right: 0; }
.g7 { width: 64px; }
.g7 .glabel { padding-right: 4px; }

.viewport { position: relative; height: 835px; background: #fff; overflow: hidden; }
.browser { position: absolute; left: 4px; top: 4px; width: 300px; }
.panel-head { width: 300px; height: 25px; border: 1px solid #c8c8c8; background: #f1f1f1; display: flex; align-items: center; padding: 0 2px 1px 4px; font-size: 13px; color: #555; }
.panel-title { margin: 0 auto 0 9px; letter-spacing: -1.3px; font-feature-settings: "palt"; }
.grip { width: 3px; height: 12px; margin-left: 6px; border-left: 1px solid #888; border-right: 1px solid #888; }
.tree { list-style: none; margin: 5px 0 0; padding: 0; font-size: 13px; color: #222; }
.tree li { display: flex; align-items: center; height: 20px; margin-bottom: 4px; padding-left: 36px; }
.tree li.root { padding-left: 16px; }
.node { height: 20px; margin-left: 9px; background: #f1f1f1; display: flex; align-items: center; padding-left: 3px; font-feature-settings: "palt"; letter-spacing: -1px; }
.node span { padding-bottom: 2px; }
.root .node { margin-left: 8px; width: 168px; }
.sel { width: 118px; height: 16px; margin: 0 4px 0 6px; background: #8f8f8f; color: #fff; font-weight: 700; display: flex; align-items: center; padding-left: 2px; }
.sel span { margin-left: 13px; letter-spacing: 0.3px; font-feature-settings: normal; }
.n1, .n2 { margin-left: 13px; }
.f2 { margin-left: 9px; }
.n3, .n4, .n5 { margin-left: 13px; }
.n3 { letter-spacing: 0; }
.w138 { width: 138px; } .w98 { width: 98px; } .w95 { width: 95px; } .w107 { width: 107px; }
.viewcube { position: absolute; left: 1797px; top: 13px; }
.cube-text { font-family: "Noto Sans CJK JP", sans-serif; }
.axis-text { font-family: "Liberation Sans", sans-serif; font-size: 13px; font-weight: 700; }
.comment { position: absolute; left: 4px; top: 806px; padding-left: 14px; border-top-color: #eee; }
.navbar { position: absolute; left: 839px; top: 807px; background: #f1f1f1; }

.timeline { height: 43px; border-top: 1px solid #bfbfbf; display: flex; align-items: center; }
.features { position: relative; display: flex; height: 42px; padding-top: 11px; }
.feat { width: 24px; height: 24px; padding: 0 1px 1px 0; border-radius: 3px; display: flex; align-items: center; justify-content: center; }
.hl { background: #e6e61e; }
.track { position: absolute; left: 0; top: 8px; }
.settings { margin: 6px 13px 0 auto; }

.taskbar { height: 50px; display: flex; color: #fff; background: linear-gradient(90deg, #24333a 0, #26353b 60px, #3b3b3d 490px, #393a3d 600px, #293743 780px, #28353f 850px, #292b38 1000px, #282633 1400px, #2a2230 1700px, #221f25 1920px); }
.start { width: 60px; display: flex; align-items: center; justify-content: center; }
.search { width: 430px; background: #f2f2f2; border: 1px solid #bbb; border-left-color: #999; display: flex; align-items: center; padding-left: 14px; color: #222; font-size: 18px; }
.search span { margin: 0 0 2px 13px; letter-spacing: -1.1px; font-feature-settings: "palt"; }
.apps { display: flex; }
.app { width: 62px; display: flex; align-items: center; justify-content: center; position: relative; }
.app:nth-child(1) { width: 60px; }
.app:nth-child(2) { width: 63px; padding-right: 4px; }
.run { background: linear-gradient(#76b9ed, #76b9ed) center bottom / 51px 3px no-repeat; }
.on { background: linear-gradient(#76b9ed, #76b9ed) center bottom / 62px 3px no-repeat, #53535d; }
.count { position: absolute; width: 20px; height: 20px; border: 1px solid #999; border-radius: 10px; background: #2c2d38; font-size: 14px; line-height: 18px; text-align: center; font-weight: 600; }
.mail .count { left: 36px; top: 24px; }
.f360 { font-family: "Liberation Sans", sans-serif; font-size: 7px; fill: #e08a35; }
.tray { flex: 1; display: flex; align-items: center; padding-left: 178px; }
.weather { margin-left: 33px; }
.temp { width: 42px; margin-left: 11px; font-size: 16px; letter-spacing: -0.3px; }
.chev { margin-left: 23px; }
.wifi { margin-left: 25px; }
.vol { margin-left: 20px; }
.pen { margin-left: 26px; }
.ime { width: 16px; margin-left: 21px; font-size: 23px; text-align: center; }
.clock { width: 90px; margin-left: 8px; display: flex; flex-direction: column; align-items: center; font-size: 15px; line-height: 23px; letter-spacing: -0.3px; }
.notif { position: relative; margin-left: 16px; }
.notif .count { left: 9px; top: 10px; }
.peek { width: 1px; height: 50px; margin: 0 4px 0 auto; background: #666; }
```
